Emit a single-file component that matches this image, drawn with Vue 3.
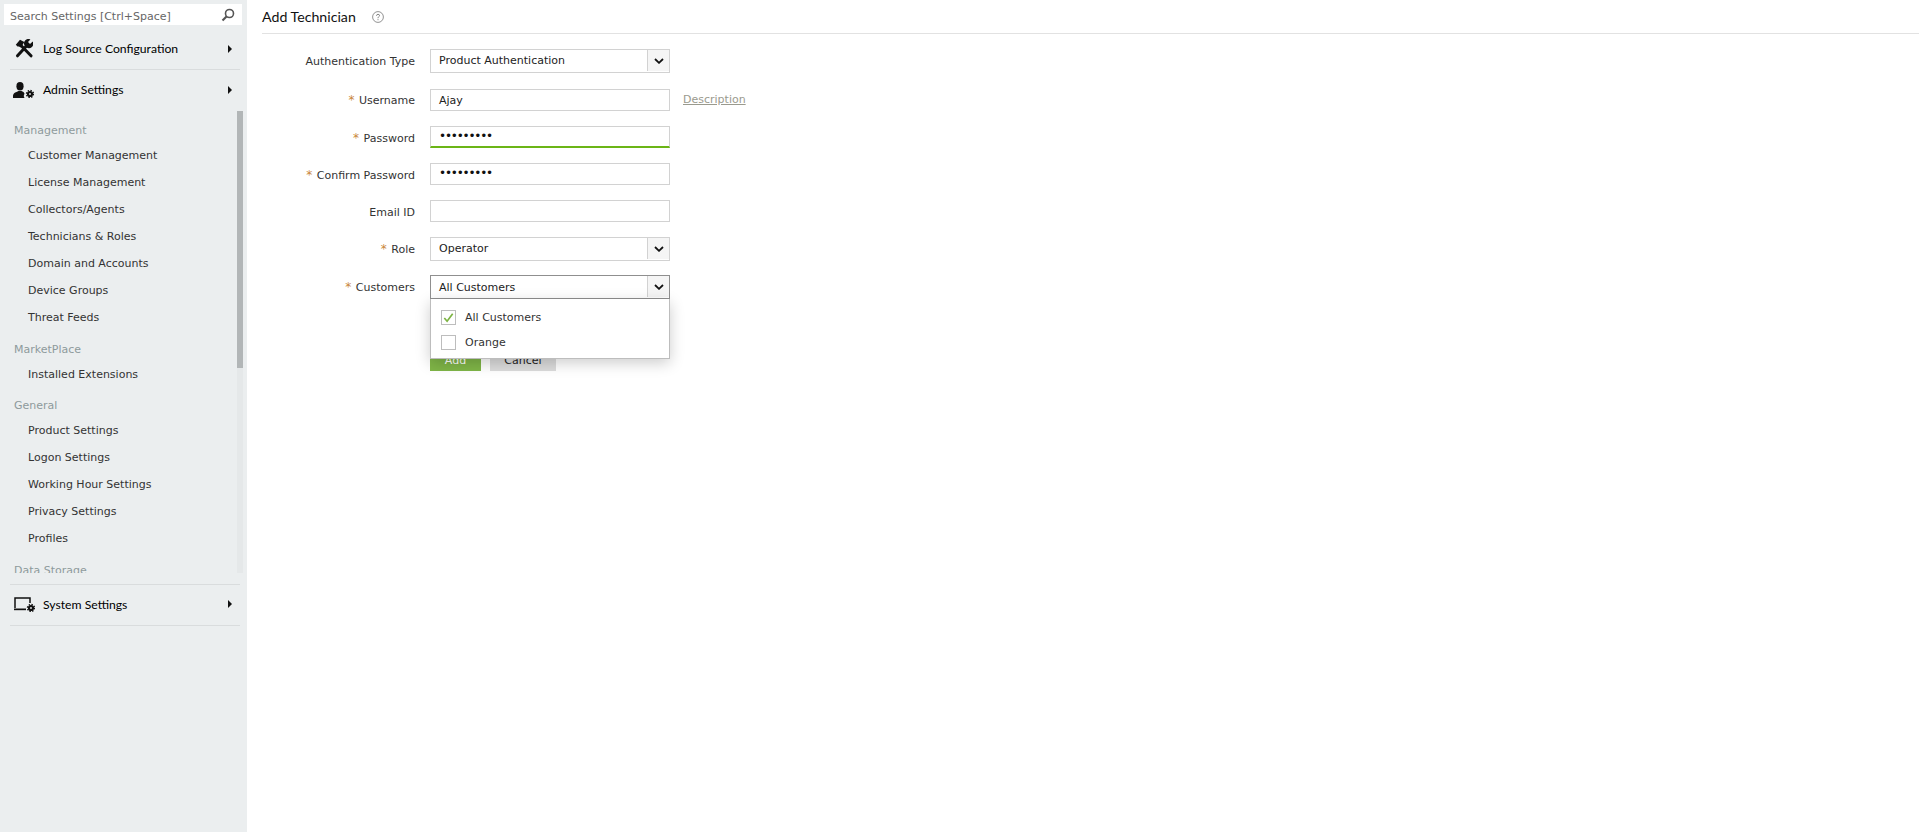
<template>
  <div class="page">
    <aside class="sidebar">
      <div class="search">
        <span class="search-text">Search Settings [Ctrl+Space]</span>
        <svg class="search-icon" viewBox="0 0 14 14" fill="none" stroke="#555" stroke-width="1.6">
          <circle cx="8.5" cy="5.5" r="4" />
          <path d="M5.5 8.5 1.5 12.5" stroke-width="2.2" />
        </svg>
      </div>

      <div class="top-item first">
        <svg class="top-icon tools" viewBox="0 0 18 19" fill="#111">
          <path d="M.8 5.8 5 .8 9.300 3 7.500 6 5.600 8.600 4 7.500H2.500z" />
          <path d="M6 6.500 16 16.800" fill="none" stroke="#111" stroke-width="3" stroke-linecap="round" />
          <path d="M17.800 2.500 15 5l-2-2 2.400-2.600A4.500 4.500 0 0 0 9.500 6.500l2 2A4.500 4.500 0 0 0 17.800 2.500z" />
          <path d="M11 7.500 2.500 16.800" fill="none" stroke="#111" stroke-width="3" stroke-linecap="round" />
        </svg>
        <span>Log Source Configuration</span>
        <i class="caret"></i>
      </div>
      <div class="top-item plain">
        <svg class="top-icon admin" viewBox="0 0 21 16" fill="#111">
          <ellipse cx="7" cy="4.200" rx="3.600" ry="4.200" />
          <path d="M0 16v-2.500Q.5 10.500 3.500 10l2-1h3l2 1 1 1.500q-1.500 2.500 0 4.500z" />
          <circle cx="17" cy="12" r="2" fill="none" stroke="#111" stroke-width="2.200" />
          <circle cx="17" cy="12" r="3.500" fill="none" stroke="#111" stroke-width="1.400" stroke-dasharray="1.400 1.350" />
        </svg>
        <span>Admin Settings</span>
        <i class="caret"></i>
      </div>

      <div class="menu">
        <div class="menu-scroll">
          <template v-for="group in groups" :key="group.title">
            <div class="group-title">{{ group.title }}</div>
            <div v-for="item in group.items" :key="item" class="menu-item">{{ item }}</div>
          </template>
        </div>
        <div class="scroll-track"><div class="scroll-thumb"></div></div>
      </div>

      <div class="top-item bottom">
        <svg class="top-icon system" viewBox="0 0 21 15" fill="none" stroke="#111">
          <path d="M1 11V1h15v5" stroke-width="1.500" />
          <path d="M0 11.500h12v1.700H0z" fill="#111" stroke="none" />
          <circle cx="17" cy="11" r="2" stroke-width="2.200" />
          <circle cx="17" cy="11" r="3.500" stroke-width="1.400" stroke-dasharray="1.400 1.350" />
        </svg>
        <span>System Settings</span>
        <i class="caret"></i>
      </div>
    </aside>

    <main class="content">
      <header class="head">
        <h1>Add Technician</h1>
        <svg class="help" viewBox="0 0 12 12" fill="none" stroke="#777">
          <circle cx="6" cy="6" r="5.400" stroke-width=".8" />
          <path d="M4.500 4.800Q4.600 3.300 6 3.300q1.500 0 1.500 1.300C7.500 5.700 6 5.600 6 7.200" stroke-width=".9" />
          <path d="M6 8.200v1" stroke-width=".9" />
        </svg>
      </header>

      <form class="form">
        <div class="row r-auth">
          <label>Authentication Type</label>
          <div class="select">Product Authentication<span class="arrow"><svg viewBox="0 0 10 6" fill="none" stroke="#111" stroke-width="1.800"><path d="M1 1l4 3.800L9 1" /></svg></span></div>
        </div>
        <div class="row r-user">
          <label><em>*</em> Username</label>
          <div class="input">Ajay</div>
          <a class="desc">Description</a>
        </div>
        <div class="row r-pass">
          <label><em>*</em> Password</label>
          <div class="input dots active">•••••••••</div>
        </div>
        <div class="row r-conf">
          <label><em>*</em> Confirm Password</label>
          <div class="input dots">•••••••••</div>
        </div>
        <div class="row r-mail">
          <label>Email ID</label>
          <div class="input"></div>
        </div>
        <div class="row r-role">
          <label><em>*</em> Role</label>
          <div class="select">Operator<span class="arrow"><svg viewBox="0 0 10 6" fill="none" stroke="#111" stroke-width="1.800"><path d="M1 1l4 3.800L9 1" /></svg></span></div>
        </div>
        <div class="row r-cust">
          <label><em>*</em> Customers</label>
          <div class="field">
            <div class="select open">All Customers<span class="arrow"><svg viewBox="0 0 10 6" fill="none" stroke="#111" stroke-width="1.800"><path d="M1 1l4 3.800L9 1" /></svg></span></div>
            <div class="dropdown">
              <div class="option">
                <span class="check"><svg viewBox="0 0 14 14" fill="none" stroke="#7cb342" stroke-width="1.800"><path d="M2.500 7.500l3 3.500 6-8" /></svg></span>
                All Customers
              </div>
              <div class="option">
                <span class="check"></span>
                Orange
              </div>
            </div>
          </div>
        </div>
        <div class="row buttons">
          <label></label>
          <button type="button" class="btn add">Add</button>
          <button type="button" class="btn cancel">Cancel</button>
        </div>
      </form>
    </main>
  </div>
</template>

<script setup>
const groups = [
  {
    title: 'Management',
    items: [
      'Customer Management',
      'License Management',
      'Collectors/Agents',
      'Technicians & Roles',
      'Domain and Accounts',
      'Device Groups',
      'Threat Feeds'
    ]
  },
  { title: 'MarketPlace', items: ['Installed Extensions'] },
  {
    title: 'General',
    items: ['Product Settings', 'Logon Settings', 'Working Hour Settings', 'Privacy Settings', 'Profiles']
  },
  { title: 'Data Storage', items: [] }
]
</script>

<style>
html,
body {
  margin: 0;
  background: #fff;
}
</style>

<style scoped>
.page {
  display: flex;
  height: 832px;
  overflow: hidden;
  font-family: "DejaVu Sans", sans-serif;
  font-size: 11px;
  color: #222;
}

.sidebar {
  width: 247px;
  flex: none;
  display: flex;
  flex-direction: column;
  background: #ebeeef;
  padding-top: 4px;
  box-sizing: border-box;
}

.search {
  display: flex;
  align-items: center;
  justify-content: space-between;
  height: 21px;
  margin: 0 5px 0 4px;
  padding: 0 7px 0 6px;
  background: #fff;
  box-sizing: border-box;
  color: #666;
}

.search-text {
  padding-top: 3px;
}

.search-icon {
  width: 14px;
  height: 14px;
}

.top-item {
  display: flex;
  align-items: center;
  height: 41px;
  margin: 0 7px 0 10px;
  font-family: Lato, sans-serif;
  font-size: 12.2px;
  color: #000;
  border-bottom: 1px solid #d9dcdd;
  box-sizing: border-box;
}

.top-item.first {
  height: 45px;
  padding-top: 3px;
}

.top-item.plain {
  border-bottom: none;
  padding-bottom: 2px;
}

.top-icon {
  flex: none;
}

.tools {
  width: 18px;
  height: 19px;
  margin: 0 10px 0 5px;
}

.admin {
  width: 21px;
  height: 16px;
  margin: 0 9px 0 3px;
}

.system {
  width: 21px;
  height: 15px;
  margin: 0 8px 0 4px;
}

.caret {
  margin-left: auto;
  margin-right: 8px;
  border-left: 4px solid #111;
  border-top: 4px solid transparent;
  border-bottom: 4px solid transparent;
}

.menu {
  position: relative;
  height: 462px;
  margin-bottom: 11px;
  overflow: hidden;
  flex: none;
}

.menu-scroll {
  padding-top: 9px;
}

.group-title {
  margin-left: 14px;
  height: 22px;
  line-height: 22px;
  color: #8e9a9c;
}

.menu-item {
  height: 27px;
  line-height: 27px;
  padding-left: 28px;
  color: #333;
}

.menu-item + .group-title {
  margin-top: 7.6px;
}

.scroll-track {
  position: absolute;
  top: 0;
  right: 4px;
  bottom: 0;
  width: 6px;
  background: #e5e8e9;
}

.scroll-thumb {
  height: 257px;
  background: #b2b6b7;
}

.bottom {
  border-top: 1px solid #d9dcdd;
  height: 42px;
  padding-bottom: 2px;
}

.content {
  flex: 1;
  min-width: 0;
  padding-left: 15px;
}

.head {
  display: flex;
  align-items: center;
  gap: 16px;
  height: 34px;
  border-bottom: 1px solid #e2e2e2;
  box-sizing: border-box;
}

h1 {
  margin: 0 0 1px;
  font-family: Lato, sans-serif;
  font-size: 14.2px;
  font-weight: normal;
  color: #111;
}

.help {
  width: 12px;
  height: 12px;
}

.form {
  padding-top: 15px;
}

.row {
  display: flex;
  align-items: center;
  color: #333;
}

.row label {
  width: 153px;
  margin-right: 15px;
  text-align: right;
  flex: none;
}

.r-pass label,
.r-conf label,
.r-mail label {
  padding-top: 2px;
}

.row em {
  color: #c9863a;
  font-style: normal;
  font-size: 12px;
  margin-right: 1px;
}

.input,
.select {
  position: relative;
  width: 240px;
  height: 22px;
  line-height: 21px;
  padding-left: 8px;
  border: 1px solid #d2d2d2;
  box-sizing: border-box;
  background: #fff;
  color: #222;
}

.select {
  height: 24px;
  line-height: 22px;
}

.arrow {
  position: absolute;
  top: 0;
  right: 0;
  width: 22px;
  height: 21px;
  display: flex;
  align-items: center;
  justify-content: center;
  background: #f5f5f5;
  border-left: 1px solid #d2d2d2;
  box-sizing: border-box;
}

.arrow svg {
  width: 10px;
  height: 6px;
}

.input.dots {
  font-size: 12px;
  color: #111;
  letter-spacing: -1.2px;
  line-height: 19px;
}

.input.active {
  border-bottom: 2px solid #6bb516;
}

.desc {
  margin: 0 0 2px 13px;
  color: #9a9a8e;
  text-decoration: underline;
}

.r-user {
  margin-top: 16px;
}

.r-pass {
  margin-top: 15px;
}

.r-conf {
  margin-top: 15px;
}

.r-mail {
  margin-top: 15px;
}

.r-role {
  margin-top: 15px;
}

.r-cust {
  margin-top: 14px;
  position: relative;
  z-index: 2;
  align-items: flex-start;
}

.r-cust label {
  line-height: 24px;
}

.field {
  position: relative;
  width: 240px;
}

.select.open {
  border-color: #8f8f8f;
  line-height: 24px;
}

.dropdown {
  position: absolute;
  top: 24px;
  left: 0;
  width: 240px;
  height: 60px;
  background: #fff;
  border: 1px solid #bdbdbd;
  border-top: none;
  box-sizing: border-box;
  box-shadow: 0 4px 14px rgba(0, 0, 0, 0.2);
  padding-top: 6px;
}

.option {
  display: flex;
  align-items: center;
  gap: 9px;
  height: 25px;
  padding-left: 10px;
  color: #333;
}

.check {
  width: 15px;
  height: 15px;
  border: 1px solid #bdbdbd;
  box-sizing: border-box;
  display: block;
}

.check svg {
  display: block;
  width: 13px;
  height: 13px;
}

.buttons {
  margin-top: 49px;
}

.btn {
  height: 22px;
  border: none;
  padding: 0;
  font: inherit;
}

.add {
  width: 51px;
  background: #7fb547;
  color: #fff;
}

.cancel {
  width: 66px;
  margin-left: 9px;
  background: #dcdcdc;
  color: #222;
}
</style>
